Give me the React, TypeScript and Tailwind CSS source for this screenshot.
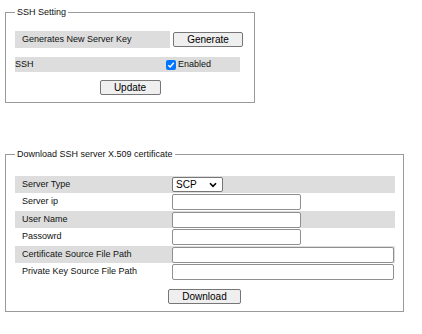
import React from "react";

function Btn({ label, w }: { label: string; w: string }) {
  return (
    <button
      type="button"
      className={`${w} h-[15px] flex items-center justify-center bg-[#efefef] border border-[#767676] rounded-[2px] text-[10px] leading-none text-black`}
    >
      {label}
    </button>
  );
}

function TextInput({ w }: { w: string }) {
  return (
    <input
      type="text"
      className={`${w} h-[16px] bg-white border border-[#8f8f8f] rounded-[2px] outline-none text-[10px] px-[2px]`}
    />
  );
}

export default function App() {
  const rows: { label: string; gray: boolean; h: string; kind: "select" | "short" | "long" }[] = [
    { label: "Server Type", gray: true, h: "h-[17px]", kind: "select" },
    { label: "Server ip", gray: false, h: "h-[18px]", kind: "short" },
    { label: "User Name", gray: true, h: "h-[17px]", kind: "short" },
    { label: "Passowrd", gray: false, h: "h-[18px]", kind: "short" },
    { label: "Certificate Source File Path", gray: true, h: "h-[17px]", kind: "long" },
    { label: "Private Key Source File Path", gray: false, h: "h-[18px]", kind: "long" },
  ];

  return (
    <div className="w-[422px] h-[334px] bg-white pt-[6px] text-[9px] text-[#111] font-['Liberation_Sans',Arial,sans-serif] overflow-hidden">
      <fieldset className="ml-[5px] w-[250px] border border-[#9a9a9a] pl-[9px] pr-0 pb-[7px] pt-0 m-0">
        <legend className="px-[2px] text-[9px] leading-[12px]">SSH Setting</legend>
        <div className="mt-[13px] flex">
          <div className="w-[155px] h-[17px] bg-[#dddddd] pl-[7px] flex items-center">
            Generates New Server Key
          </div>
          <div className="pl-[3px] h-[17px] flex items-center">
            <Btn label="Generate" w="w-[70px]" />
          </div>
        </div>
        <div className="mt-[9px] flex w-[225px] h-[15px] bg-[#dddddd]">
          <div className="w-[150px] flex items-center">SSH</div>
          <div className="flex items-center pl-[1px]">
            <span className="w-[10px] h-[10px] bg-[#0075ff] rounded-[2px] flex items-center justify-center">
              <svg width="8" height="8" viewBox="0 0 8 8">
                <path d="M1.3 4.2 L3.2 6 L6.8 1.8" fill="none" stroke="#fff" strokeWidth="1.5" />
              </svg>
            </span>
            <span className="ml-[2px]">Enabled</span>
          </div>
        </div>
        <div className="mt-[8px] flex justify-center pr-[9px]">
          <Btn label="Update" w="w-[61px]" />
        </div>
      </fieldset>

      <fieldset className="mt-[45px] ml-[5px] w-[399px] border border-[#9a9a9a] pl-[9px] pr-0 pb-[7px] pt-0 m-0">
        <legend className="px-[2px] text-[9px] leading-[12px]">Download SSH server X.509 certificate</legend>
        <div className="mt-[16px] w-[380px] flex flex-col">
          {rows.map((r) => (
            <div key={r.label} className={`${r.h} flex items-center ${r.gray ? "bg-[#dddddd]" : "bg-white"}`}>
              <div className="w-[157px] pl-[7px]">{r.label}</div>
              {r.kind === "select" ? (
                <div className="relative w-[51px] h-[15px] bg-white border border-[#767676] rounded-[2px] flex items-center pl-[3px] text-[10px] text-black">
                  SCP
                  <svg className="absolute right-[5px] top-[4px]" width="8" height="6" viewBox="0 0 8 6">
                    <path d="M1 1.2 L4 4.3 L7 1.2" fill="none" stroke="#000" strokeWidth="1.6" />
                  </svg>
                </div>
              ) : r.kind === "short" ? (
                <TextInput w="w-[129px]" />
              ) : (
                <TextInput w="w-[222px]" />
              )}
            </div>
          ))}
        </div>
        <div className="mt-[8px] flex justify-center pr-[9px]">
          <Btn label="Download" w="w-[73px]" />
        </div>
      </fieldset>
    </div>
  );
}
